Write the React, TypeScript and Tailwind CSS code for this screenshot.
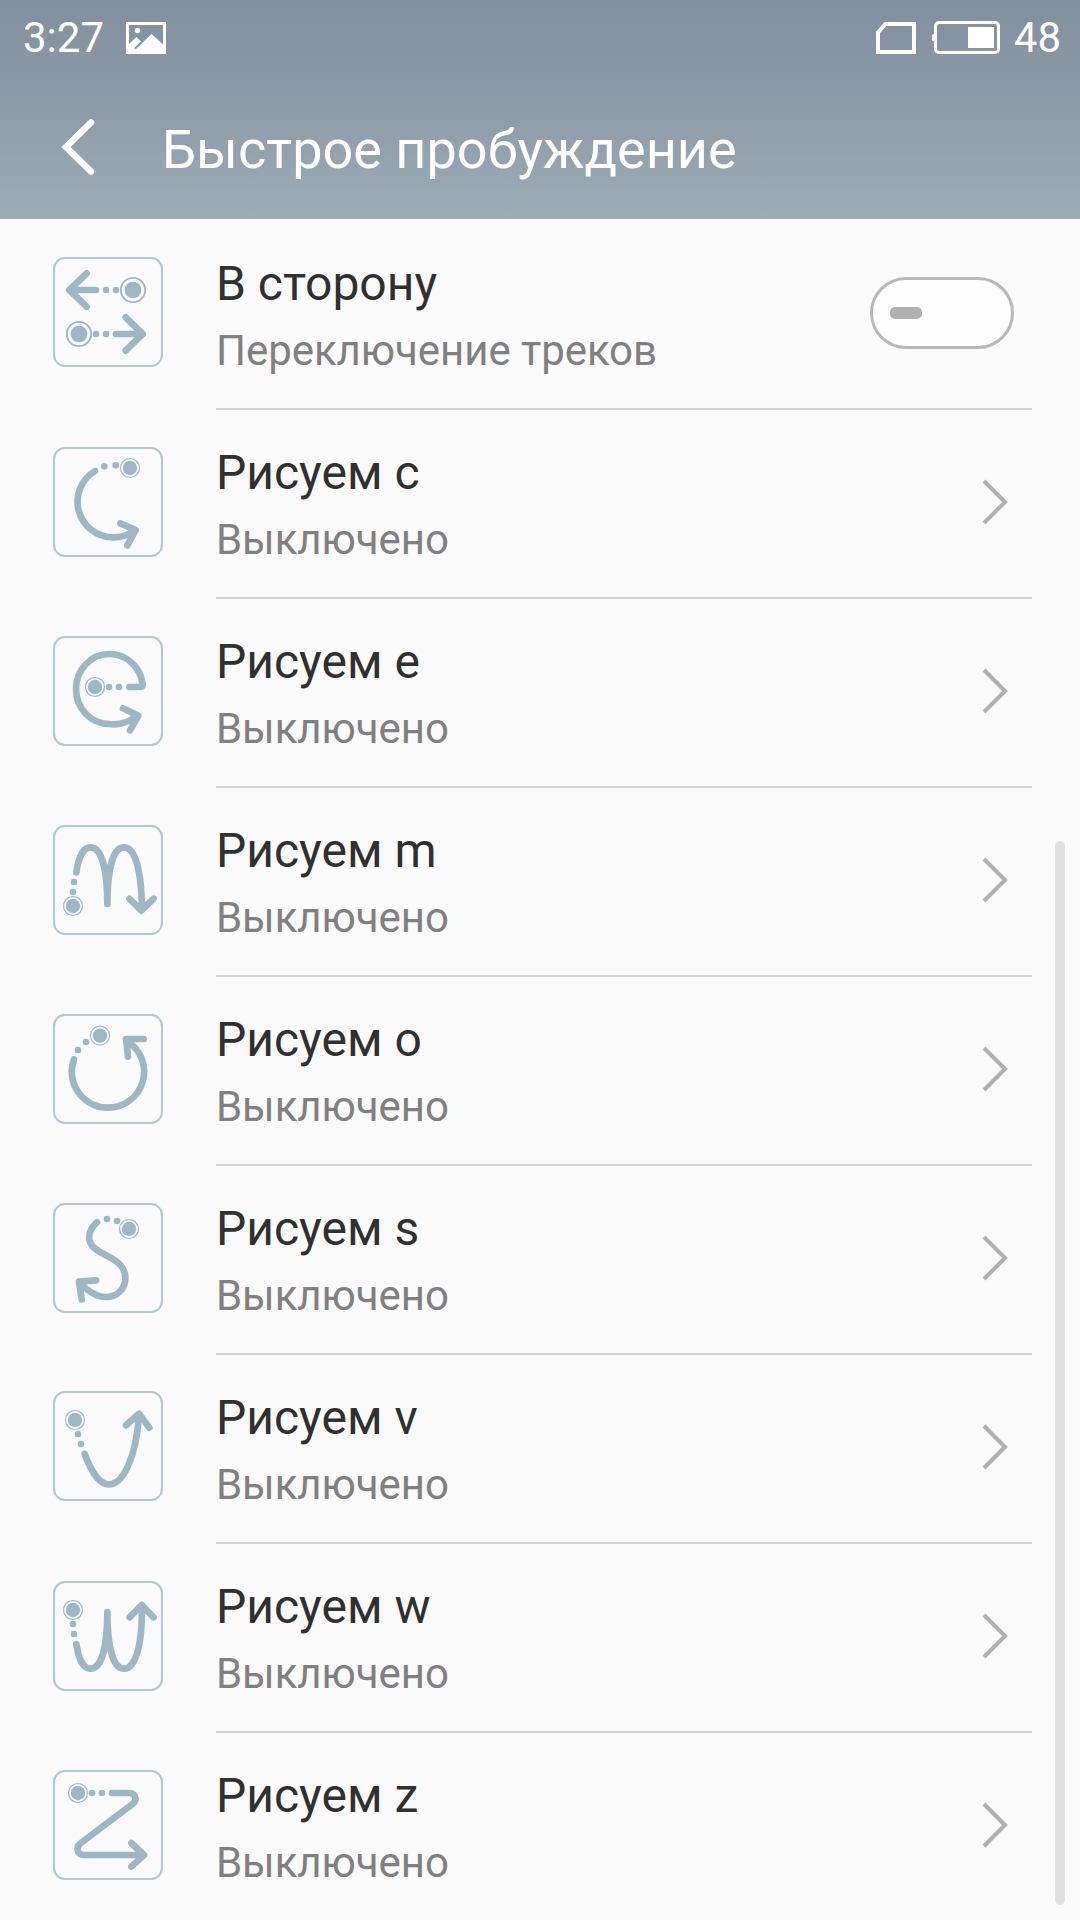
import React, { useState } from "react";

type Gesture = {
  id: string;
  title: string;
  subtitle: string;
  toggle?: boolean;
};

const gestures: Gesture[] = [
  { id: "side", title: "В сторону", subtitle: "Переключение треков", toggle: true },
  { id: "c", title: "Рисуем c", subtitle: "Выключено" },
  { id: "e", title: "Рисуем e", subtitle: "Выключено" },
  { id: "m", title: "Рисуем m", subtitle: "Выключено" },
  { id: "o", title: "Рисуем o", subtitle: "Выключено" },
  { id: "s", title: "Рисуем s", subtitle: "Выключено" },
  { id: "v", title: "Рисуем v", subtitle: "Выключено" },
  { id: "w", title: "Рисуем w", subtitle: "Выключено" },
  { id: "z", title: "Рисуем z", subtitle: "Выключено" },
];

// start point, trail dots, stroke and arrow head of each gesture
const drawings: Record<
  string,
  { start: number[][]; dots: number[][]; path: string; big?: boolean }
> = {
  side: {
    start: [[240, 99], [78, 231]],
    dots: [[159, 99], [189, 99], [129, 231], [159, 231]],
    path: "M129 99H49M101 49L49 99L101 149M189 231H269M218 181L269 231L218 281",
    big: true,
  },
  c: {
    start: [[231, 63]],
    dots: [[154, 58], [188, 55]],
    path: "M126 72A107 107 0 0 0 178 271A107 107 0 0 0 245 250M202 229L248 249L223 295",
  },
  e: {
    start: [[126, 153]],
    dots: [[168, 153], [198, 153]],
    path: "M229 153H262Q270 153 269 145A100 105 0 0 0 169 54A100 105 0 0 0 169 264A105 105 0 0 0 250 240M210 217L256 239L231 283",
  },
  m: {
    start: [[60, 243]],
    dots: [[63, 171], [60, 201]],
    path: "M70 142C76 100 90 67 112 67C145 67 163 130 163 237C163 130 181 67 213 67C245 67 265 130 267 252M229 221L265 257L302 221",
  },
  o: {
    start: [[141, 65]],
    dots: [[99, 84], [75, 108]],
    path: "M63 136A108 108 0 0 0 165 281A108 108 0 0 0 225 83M272 75H219L225 128",
  },
  s: {
    start: [[228, 78]],
    dots: [[162, 48], [192, 54]],
    path: "M132 58C112 76 103 99 112 120C130 160 217 160 217 226C217 258 192 282 160 282C125 282 99 260 80 237M129 232L78 236L86 289",
  },
  v: {
    start: [[66, 87]],
    dots: [[75, 129], [84, 159]],
    path: "M95 189C112 235 138 280 167 280C210 280 250 200 258 70M219 103L258 68L289 110",
  },
  w: {
    start: [[60, 87]],
    dots: [[60, 129], [63, 159]],
    path: "M70 189C76 230 90 263 112 263C145 263 163 200 163 93C163 200 181 263 213 263C245 263 268 200 267 74M230 109L266 72L302 109",
  },
  z: {
    start: [[75, 69]],
    dots: [[117, 69], [147, 69]],
    path: "M177 69H229C247 69 254 89 240 101L81 221C66 234 75 255 93 255H272M235 219L273 255L235 290",
  },
};

const GestureIcon: React.FC<{ id: string }> = ({ id }) => {
  const { start, dots, path, big } = drawings[id];
  return (
    <svg viewBox="0 0 330 330" className="size-[110px] shrink-0 text-[#9db7c4]">
      <rect x="3" y="3" width="324" height="324" rx="33" fill="none" stroke="#b3c8d0" strokeWidth="6.500" />
      <path
        d={path}
        fill="none"
        stroke="currentColor"
        strokeWidth="20"
        strokeLinecap="round"
        strokeLinejoin="round"
      />
      {dots.map(([x, y]) => (
        <circle key={`${x}-${y}`} cx={x} cy={y} r="10" fill="currentColor" />
      ))}
      {start.map(([x, y]) => (
        <g key={`${x}-${y}`}>
          <circle cx={x} cy={y} r={big ? 25 : 21.5} fill="currentColor" />
          <circle
            cx={x}
            cy={y}
            r={big ? 36.5 : 28.5}
            fill="none"
            stroke="currentColor"
            strokeWidth={big ? 5.5 : 3.5}
          />
        </g>
      ))}
    </svg>
  );
};

const StatusBar: React.FC = () => (
  <div className="flex h-[75px] items-center justify-between pl-[23px] pr-[19px] text-[42px] leading-none">
    <div className="flex items-center gap-[22px]">
      <span>3:27</span>
      <svg viewBox="0 0 40 32" className="h-8 w-10">
        <path
          fill="currentColor"
          fillRule="evenodd"
          d="M0 0H40V32H0ZM3 3V22L10.5 15L15 19.500L8 26L9.500 27.500L25.500 12L37 22.500V3Z"
        />
        <circle cx="11.500" cy="8.500" r="2.700" fill="currentColor" />
      </svg>
    </div>
    <div className="flex items-center">
      <svg viewBox="0 0 40 32" className="mr-4 h-8 w-10">
        <path d="M2 30V10.500L9.500 2H38V30Z" fill="none" stroke="currentColor" strokeWidth="4" />
      </svg>
      <svg viewBox="0 0 68 33" className="mr-[14px] h-[33px] w-[68px]">
        <rect x="3.500" y="1.500" width="63" height="30" rx="3.500" fill="none" stroke="currentColor" strokeWidth="3" />
        <rect x="0" y="13" width="4" height="7" rx="1.500" fill="currentColor" />
        <rect x="36" y="6" width="26" height="21" fill="currentColor" />
      </svg>
      <span>48</span>
    </div>
  </div>
);

const Toggle: React.FC = () => {
  const [on, setOn] = useState<boolean>(false);
  return (
    <button
      onClick={() => setOn(!on)}
      className={`mr-[18px] flex h-[72px] w-36 items-center rounded-full border-[3px] border-[#b8b8b8] bg-[#fdfdfd] px-[17px] ${
        on ? "justify-end" : "justify-start"
      }`}
    >
      <span className="h-3 w-8 rounded-[5px] bg-[#b0b0b0]"></span>
    </button>
  );
};

const App: React.FC = () => {
  return (
    <div className="relative h-[1920px] w-[1080px] overflow-hidden bg-[#fafafa] font-['Roboto',sans-serif]">
      <header className="h-[219px] bg-linear-to-b from-[#8190a0] via-[#8c9ca9] to-[#9badb5] text-white">
        <StatusBar />
        <div className="flex h-36 items-center pl-[61px]">
          <svg viewBox="0 0 34 58" className="h-[58px] w-[34px]">
            <path
              d="M30 4.500L5 29L30 53.500"
              fill="none"
              stroke="currentColor"
              strokeWidth="6.500"
              strokeLinecap="round"
            />
          </svg>
          <h1 className="ml-[67px] pt-[5px] text-[54px] leading-none">Быстрое пробуждение</h1>
        </div>
      </header>

      <ul className="pt-[2px]">
        {gestures.map((item) => (
          <li key={item.id} className="flex h-[189px] pl-[53px] pr-12">
            <div className={item.id === "side" || item.id === "v" ? "pt-9" : "pt-[37px]"}>
              <GestureIcon id={item.id} />
            </div>
            <div className="ml-[53px] flex flex-1 items-start justify-between border-b-2 border-[#d2d2d2]">
              <div className="pt-[35px]">
                <p className="text-[48px] leading-[56px] text-[#303030]">{item.title}</p>
                <p className="mt-[14px] text-[42px] leading-[50px] tracking-[-0.05px] text-[#808080]">
                  {item.subtitle}
                </p>
              </div>
              <div className="flex h-[184px] items-center">
                {item.toggle ? (
                  <Toggle />
                ) : (
                  <svg viewBox="0 0 26 46" className="mr-6 h-[46px] w-[26px]">
                    <path d="M2 2L23 23L2 44" fill="none" stroke="#b0b0b0" strokeWidth="4" />
                  </svg>
                )}
              </div>
            </div>
          </li>
        ))}
      </ul>

      {/* scroll thumb over the list */}
      <div className="absolute right-[15px] top-[841px] h-[1064px] w-[10px] rounded-full bg-[#e0e0e0]"></div>
    </div>
  );
};

export default App;
